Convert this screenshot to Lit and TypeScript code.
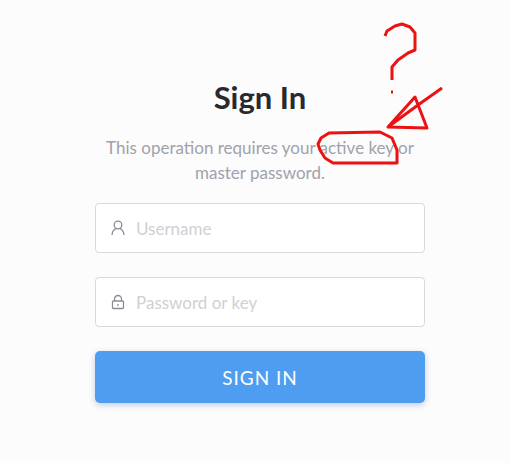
import { LitElement, html, css, svg } from "lit";
import { customElement } from "lit/decorators.js";

@customElement("app-root")
export class AppRoot extends LitElement {
  static styles = css`
    :host {
      display: block;
      position: relative;
      width: 509px;
      height: 463px;
      overflow: hidden;
      background: #fcfcfd;
      font-family: Lato, "Open Sans", sans-serif;
    }
    .form {
      width: 330px;
      margin-left: 95px;
      padding-top: 77px;
      display: flex;
      flex-direction: column;
      align-items: stretch;
    }
    h1 {
      margin: 0 0 18px;
      font-size: 31px;
      line-height: 40px;
      font-weight: 700;
      text-align: center;
      color: #2a2a2e;
    }
    p {
      margin: 0 0 18px;
      font-size: 17px;
      line-height: 25px;
      text-align: center;
      color: #a0a2ab;
    }
    .field {
      box-sizing: border-box;
      height: 50px;
      margin-bottom: 24px;
      display: flex;
      align-items: center;
      gap: 11px;
      padding-left: 15px;
      background: #fff;
      border: 1px solid #d9d9d9;
      border-radius: 4px;
      font-size: 17px;
      color: #d0d0d3;
    }
    .field svg {
      width: 14px;
      height: 16px;
      flex: none;
      fill: none;
      stroke: #8b8d96;
      stroke-width: 1.3;
    }
    button {
      height: 52px;
      border: 0;
      border-radius: 5px;
      background: #4e9df0;
      color: #fff;
      font: 400 19px Lato, sans-serif;
      letter-spacing: 1px;
      box-shadow: 0 2px 6px rgba(60, 90, 150, 0.3);
      padding: 0;
    }
    .scribble {
      position: absolute;
      inset: 0;
      width: 509px;
      height: 463px;
      fill: none;
      stroke: #ee1111;
      stroke-width: 3;
      stroke-linejoin: round;
      pointer-events: none;
    }
  `;

  render() {
    return html`
      <div class="form">
        <h1>Sign In</h1>
        <p>This operation requires your active key or<br />master password.</p>
        <div class="field">
          <svg viewBox="0 0 14 16">
            <circle cx="7" cy="5" r="3.8" />
            <path d="M1 15c.3-3.6 2-5.5 4-6.3M13 15c-.3-3.6-2-5.5-4-6.3" />
          </svg>
          <span>Username</span>
        </div>
        <div class="field">
          <svg viewBox="0 0 14 16">
            <path d="M3.5 7V5a3.5 3.5 0 0 1 7 0v2" />
            <rect x="1.5" y="7" width="11" height="7.5" rx="1" />
            <path d="M7 10v2" />
          </svg>
          <span>Password or key</span>
        </div>
        <button>SIGN IN</button>
      </div>
      <svg class="scribble" viewBox="0 0 509 463">
        ${svg`
          <path d="M385 36l2-5 8-5 7-2 8 3 5 6v17l-7 3-10 7-6 7v13" />
          <path d="M391 92h2" />
          <path d="M442 88l-24 17-30 22 27-30 12 31-39-1" />
          <path d="M318 144l3-6 8-5 51-1 12 6 5 12v13h-64l-8-5-5-8z" />
        `}
      </svg>
    `;
  }
}
